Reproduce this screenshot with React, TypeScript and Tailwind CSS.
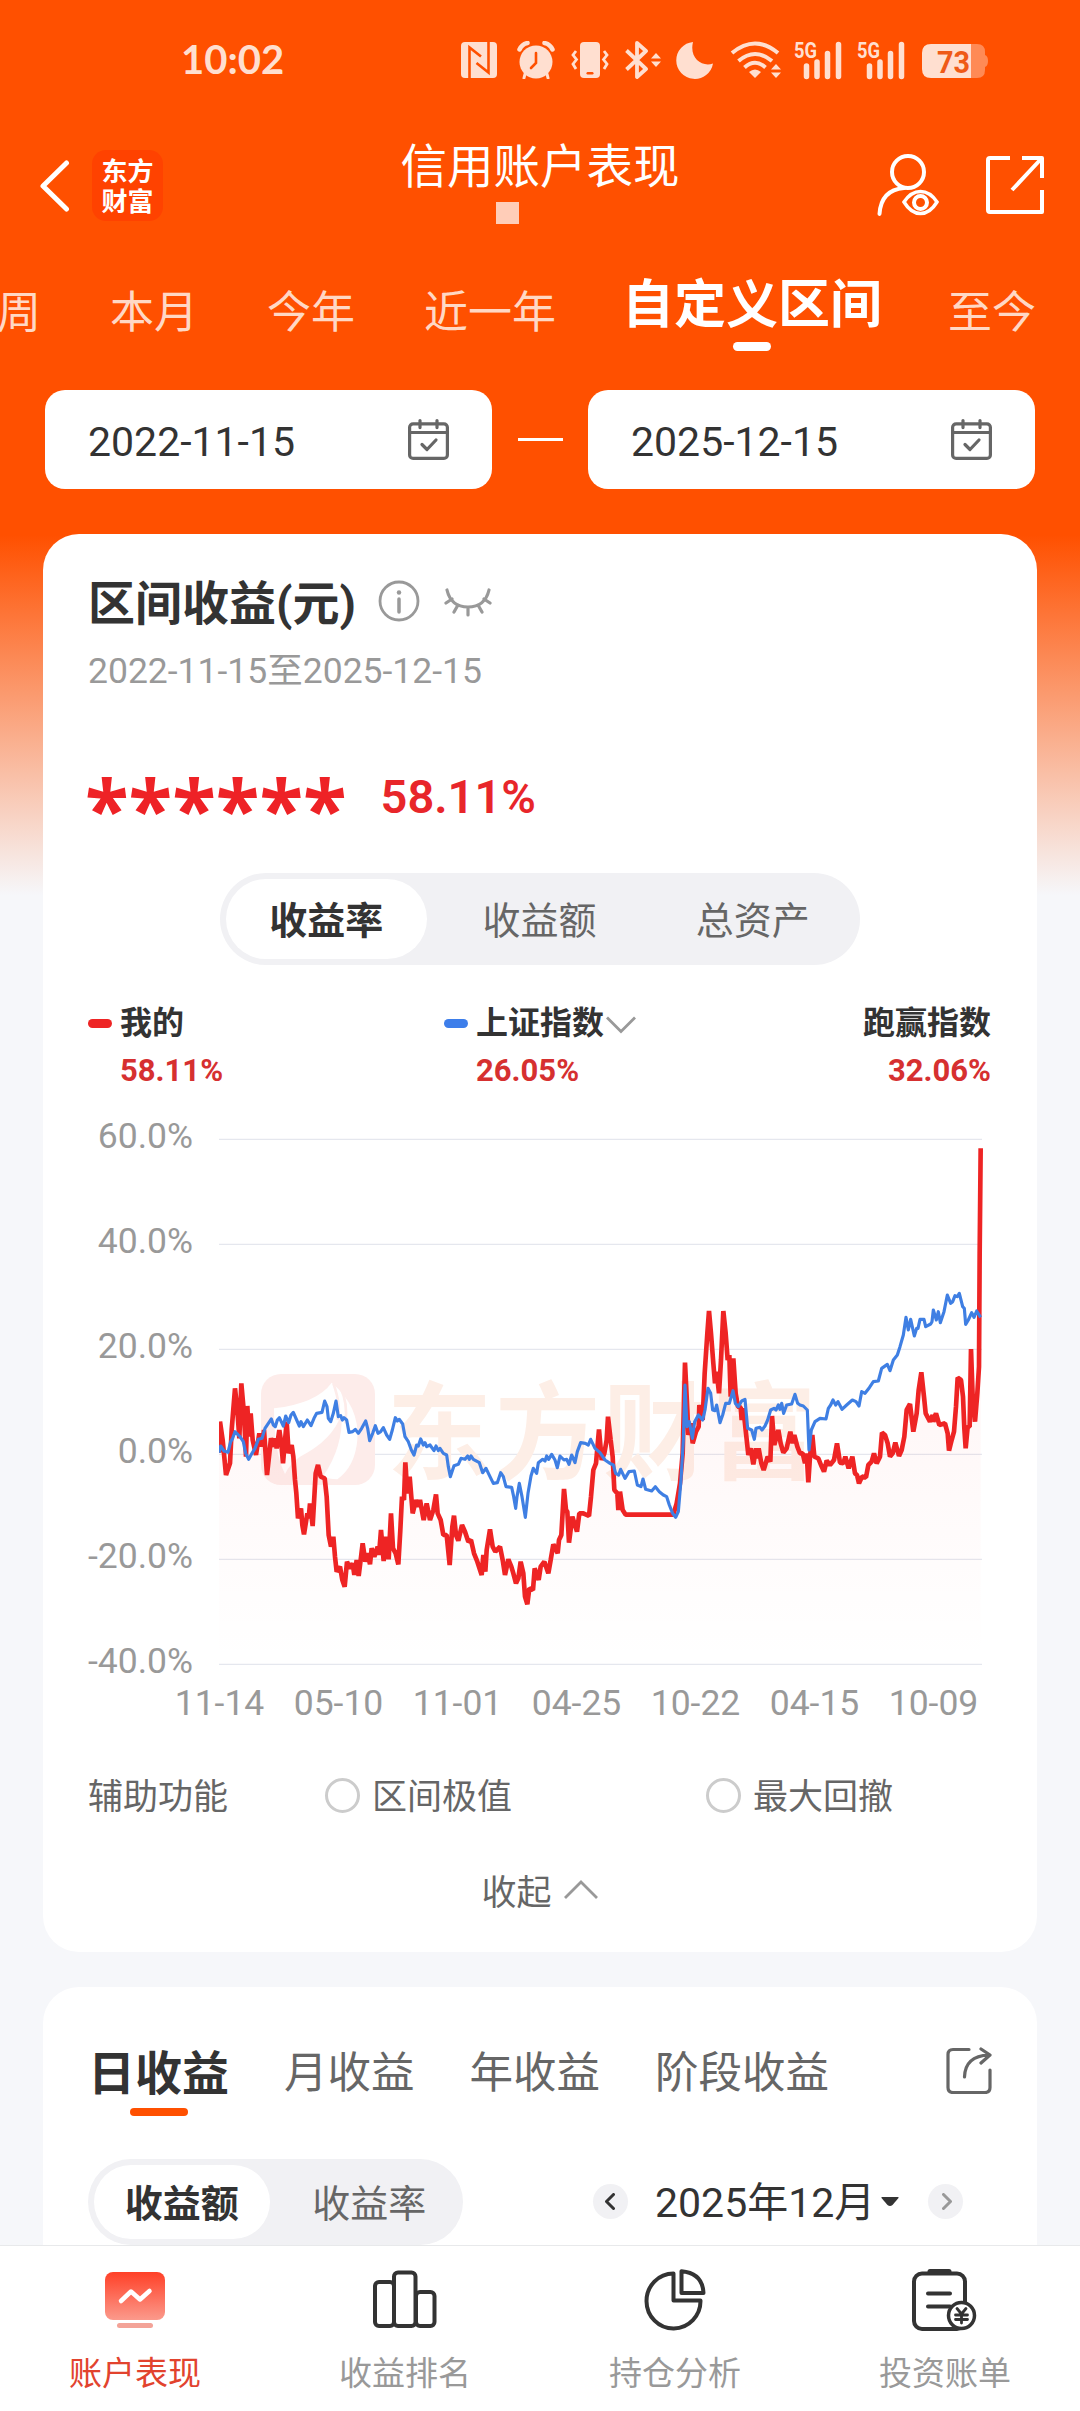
import React, { useState } from 'react';

const RANGES = ['周', '本月', '今年', '近一年', '自定义区间', '至今'];
const METRICS = ['收益率', '收益额', '总资产'];
const PERIODS = ['日收益', '月收益', '年收益', '阶段收益'];
const Y_TICKS = ['60.0%', '40.0%', '20.0%', '0.0%', '-20.0%', '-40.0%'];
const X_TICKS = ['11-14', '05-10', '11-01', '04-25', '10-22', '04-15', '10-09'];

// Chart space: three units per pixel, 0% sits at y = 1003 and 20% is 315 units
const MINE =
  '57,998 60,905 68,960 78,1065 90,1030 95,930 105,805 112,870 118,955 124,790 132,880 138,1010 142,858 147,950 152,880 158,960 168,1005 178,940 186,980 192,930 201,1065 213,955 222,980 226,955 230,985 238,930 244,970 249,1030 260,905 266,1000 275,975 280,1010 285,1080 289,1120 294,1195 303,1165 307,1215 312,1243 322,1180 326,1195 330,1150 338,1218 347,1060 354,1035 362,1070 374,1075 380,1130 386,1245 393,1280 400,1250 405,1310 410,1355 420,1340 427,1380 434,1400 441,1325 450,1345 458,1330 463,1365 470,1320 476,1368 482,1320 488,1270 496,1325 503,1300 510,1333 515,1285 523,1310 533,1280 537,1305 543,1230 551,1323 558,1250 566,1318 573,1180 579,1285 587,1300 595,1333 601,1230 606,1130 612,1140 616,1027 622,1120 629,1070 638,1180 648,1140 655,1160 660,1140 671,1200 680,1150 690,1200 700,1170 708,1123 713,1180 722,1200 730,1245 740,1245 749,1335 757,1220 762,1187 768,1245 775,1262 786,1215 795,1235 805,1265 813,1260 822,1300 832,1325 845,1365 850,1305 856,1355 860,1290 870,1228 878,1280 886,1295 900,1280 908,1320 915,1365 925,1318 934,1340 940,1360 948,1390 955,1375 962,1325 970,1360 975,1430 982,1453 988,1405 999,1410 1004,1345 1016,1380 1022,1340 1033,1325 1045,1360 1052,1320 1060,1273 1073,1300 1077,1260 1084,1245 1092,1107 1098,1170 1102,1175 1107,1268 1117,1190 1131,1235 1138,1180 1150,1180 1167,1188 1173,1130 1180,1050 1188,1030 1197,928 1205,1020 1213,1000 1220,960 1224,890 1232,960 1238,1010 1243,1110 1252,1120 1255,1170 1260,1115 1268,1170 1277,1184 1420,1184 1430,1150 1440,1090 1448,1000 1455,728 1462,870 1465,945 1472,910 1478,970 1488,935 1496,920 1498,855 1508,900 1514,760 1522,640 1527,573 1533,640 1540,730 1545,790 1550,755 1557,820 1563,720 1570,573 1577,640 1583,720 1588,705 1592,830 1600,715 1607,820 1614,860 1622,862 1625,900 1630,865 1638,940 1645,1005 1652,985 1660,1033 1668,985 1672,1015 1676,985 1684,1030 1691,1050 1703,1010 1711,1025 1716,888 1723,975 1735,930 1742,970 1750,998 1760,985 1771,935 1778,970 1783,945 1792,980 1800,1000 1808,1000 1815,1030 1820,1000 1825,1087 1830,1010 1837,945 1843,1010 1855,1015 1863,1035 1872,1055 1880,1022 1890,1035 1902,1020 1911,970 1920,1028 1930,1030 1936,1010 1946,1045 1957,1010 1965,1060 1971,1065 1977,1090 1986,1070 1998,1072 2005,1035 2015,1025 2022,1000 2030,1030 2040,1010 2046,938 2055,945 2063,970 2070,1010 2078,1000 2086,968 2097,1008 2105,990 2113,950 2120,870 2130,852 2140,935 2150,880 2156,810 2164,757 2172,830 2177,880 2190,905 2198,885 2200,905 2208,880 2218,915 2235,910 2243,940 2247,992 2255,960 2262,935 2268,860 2273,773 2283,780 2289,830 2293,925 2297,985 2303,920 2309,920 2313,687 2318,830 2325,905 2332,820 2337,740 2339,400 2342,85';

const INDEX =
  '57,998 62,978 72,993 84,997 92,965 98,955 105,935 120,950 130,965 137,1000 146,1018 156,1000 165,985 175,958 186,955 195,925 205,910 214,897 220,915 226,920 232,900 238,893 250,918 257,888 266,908 273,885 280,877 290,900 298,918 303,905 310,920 322,900 333,917 342,895 350,880 366,877 374,843 381,860 385,895 392,905 400,880 408,843 415,890 422,887 427,900 432,893 440,900 447,937 458,935 466,928 475,940 485,925 497,903 503,925 509,962 518,940 526,917 534,940 542,935 550,923 560,945 569,958 577,930 586,893 592,903 598,898 608,912 615,950 625,965 634,990 642,1005 650,975 655,978 662,957 670,975 675,968 680,980 690,975 702,992 708,978 715,992 720,985 730,1000 740,1005 745,1040 751,1070 762,1037 775,1033 783,1015 795,1018 803,1008 808,1018 813,1008 820,1018 838,1028 848,1058 858,1045 870,1070 880,1090 892,1088 902,1058 910,1070 918,1100 935,1102 941,1130 947,1165 951,1130 958,1090 966,1130 976,1192 984,1120 993,1068 1000,1045 1010,1060 1015,1028 1028,1018 1035,1023 1040,1008 1046,1018 1055,1003 1065,1020 1072,1043 1080,1008 1092,1020 1100,1018 1107,1033 1115,1005 1125,1028 1132,995 1142,968 1156,970 1165,975 1172,958 1185,985 1200,998 1215,1020 1230,1030 1240,1035 1247,1060 1256,1065 1262,1048 1275,1075 1287,1055 1303,1053 1312,1095 1323,1100 1329,1077 1337,1108 1355,1113 1366,1100 1378,1115 1390,1125 1400,1130 1408,1155 1418,1180 1427,1192 1435,1175 1443,1080 1450,960 1455,795 1461,920 1468,905 1477,955 1484,905 1495,885 1508,900 1515,870 1524,805 1532,820 1538,870 1545,872 1550,855 1560,908 1568,885 1577,850 1588,850 1599,812 1606,850 1615,860 1625,843 1635,838 1643,925 1655,930 1663,958 1668,925 1680,922 1686,930 1695,918 1703,900 1712,870 1722,865 1728,870 1735,855 1740,868 1745,850 1751,880 1760,855 1775,852 1785,823 1793,850 1800,855 1810,858 1822,870 1827,990 1834,930 1845,905 1860,895 1878,897 1885,865 1892,855 1899,840 1907,855 1914,845 1926,868 1940,855 1957,840 1968,845 1977,858 1985,815 1995,820 2008,803 2020,785 2035,783 2045,745 2062,733 2070,752 2080,720 2092,705 2100,680 2110,645 2118,592 2125,630 2132,598 2143,648 2150,625 2154,625 2160,598 2172,598 2177,620 2192,612 2196,605 2200,570 2209,600 2215,575 2221,608 2232,575 2242,525 2252,550 2258,545 2265,527 2272,530 2278,520 2288,560 2293,565 2297,613 2305,600 2315,578 2322,592 2330,573 2342,592';

const StatusIcons: React.FC = () => (
  <div className="flex items-start text-[#ffdfd0]">
    {/* NFC */}
    <svg viewBox="0 0 36 36" className="w-9 h-9 mt-0.5">
      <rect width="36" height="36" rx="4" fill="currentColor" />
      <path d="M8.500 36V5.500L20 14.500M27.500 0V30.500L15.500 21" fill="none" stroke="#ff5000" strokeWidth="2.600" />
    </svg>
    {/* Alarm */}
    <svg viewBox="0 0 38 38" className="w-[38px] h-[38px] ml-5 mt-px">
      <circle cx="19" cy="21" r="16.500" fill="currentColor" />
      <path d="M2.500 8.500Q5 3 10.500 2M35.500 8.500Q33 3 27.500 2" stroke="currentColor" strokeWidth="4.500" strokeLinecap="round" fill="none" />
      <path d="M8 33l-1 4M30 33l1 4" stroke="currentColor" strokeWidth="3" strokeLinecap="round" />
      <path d="M19 12v10l-5 5" stroke="#ff5000" strokeWidth="2.600" fill="none" strokeLinecap="round" />
    </svg>
    {/* Vibrate */}
    <svg viewBox="0 0 38 36" className="w-[38px] h-9 ml-4 mt-0.5">
      <rect x="9" width="20" height="36" rx="4" fill="currentColor" />
      <rect x="15.500" y="30" width="7" height="2.500" rx="1.200" fill="#ff5000" />
      <path d="M5 9l-3 4 3.500 4.500L2 22l3 5M33 9l3 4-3.500 4.500L36 22l-3 5" fill="none" stroke="currentColor" strokeWidth="2.800" />
    </svg>
    {/* Bluetooth */}
    <svg viewBox="0 0 37 38" className="w-[37px] h-[38px] ml-4 mt-px">
      <path d="M1.500 9.500L21 28l-9 8V2l9 8L1.500 28.500" fill="none" stroke="currentColor" strokeWidth="3.800" strokeLinejoin="round" />
      <path d="M31 12l5 5.500H26zM31 26l5-5.500H26z" fill="currentColor" />
    </svg>
    {/* Do not disturb */}
    <svg viewBox="0 0 38 38" className="w-[38px] h-[38px] ml-3.5 mt-px">
      <path d="M17 1A18.500 18.500 0 1 0 37 22.500C26 26.500 13 17 17 1z" fill="currentColor" />
    </svg>
    {/* Wi-Fi */}
    <svg viewBox="0 0 51 38" className="w-[51px] h-[38px] ml-4 mt-px">
      <path d="M2 12Q25 -7 48 12M8.500 20Q25 6 42 20M14.500 26.500Q25 17 35.500 26.500" fill="none" stroke="currentColor" strokeWidth="4" />
      <path d="M25 37l-6-6q6-5 12 0z" fill="currentColor" />
      <path d="M46 23l5 5.500H41zM46 37l5-5.500H41z" fill="currentColor" />
    </svg>
    {[0, 1].map((sim) => (
      <svg key={sim} viewBox="0 0 50 38" className="w-[50px] h-[38px] ml-[13px] mt-px overflow-visible">
        <text x="0" y="16.500" fontSize="22" fontWeight="700" fontFamily="Roboto, sans-serif" textLength="23" lengthAdjust="spacingAndGlyphs" fill="currentColor">5G</text>
        <path d="M12.500 25v10.500M23 21v14.500M33.500 12.500v23M44.500 3.500v32" stroke="currentColor" strokeWidth="5.500" strokeLinecap="round" />
      </svg>
    ))}
    {/* Battery */}
    <svg viewBox="0 0 67 34" className="w-[67px] h-[34px] ml-[15px] mt-1 overflow-visible">
      <path d="M49 0h6q8 0 8 8v3q3 1 3 6t-3 6v3q0 8-8 8h-6z" fill="#ff8a55" />
      <path d="M49 0H9Q0 0 0 9v16q0 9 9 9h40z" fill="currentColor" />
      <text x="15" y="28.500" fontSize="32" fontWeight="700" fontFamily="Roboto, sans-serif" textLength="33" lengthAdjust="spacingAndGlyphs" fill="#ef5a17">73</text>
    </svg>
  </div>
);

const CalendarIcon: React.FC = () => (
  <svg viewBox="0 0 41 41" className="w-[41px] h-[41px] shrink-0" fill="none" stroke="#666" strokeWidth="3.200" strokeLinecap="round" strokeLinejoin="round">
    <rect x="1.600" y="4.800" width="37.800" height="34.600" rx="3.500" />
    <path d="M2 13.500h37M12 1.600v7M29 1.600v7M14 25.500l5 5 9-9.500" />
  </svg>
);

const DateField: React.FC<{ value: string }> = ({ value }) => (
  <button className="w-[447px] h-[99px] bg-white rounded-[20px] flex items-center justify-between pl-[43px] pr-[43px] text-[41px] leading-none text-[#333]">
    <span className="pt-1.5">{value}</span>
    <CalendarIcon />
  </button>
);

const ProfitChart: React.FC = () => (
  <svg viewBox="57 51 2298 1587" className="w-[766px] h-[529px] mt-[19px] ml-[26px] shrink-0">
    <defs>
      <linearGradient id="mineFill" x1="0" y1="0" x2="0" y2="1">
        <stop offset="0" stopColor="#f22" stopOpacity="0.07" />
        <stop offset="1" stopColor="#f22" stopOpacity="0" />
      </linearGradient>
    </defs>
    {[58, 373, 688, 1003, 1318, 1633].map((y) => (
      <line key={y} x1="57" x2="2346" y1={y} y2={y} stroke="#e5e7ee" strokeWidth="4" />
    ))}
    {/* Watermark */}
    <rect x="183" y="762" width="342" height="333" rx="60" fill="#fdecea" />
    <path d="M222 865Q350 850 395 788Q480 860 472 960Q465 1040 412 1078Q385 1078 370 1068Q430 980 425 880Q400 960 300 1010Q270 1030 255 1062Q222 1000 222 865z" fill="#fff" />
    <path d="M400 790Q425 860 412 900M420 800Q445 850 436 910" fill="none" stroke="#fdecea" strokeWidth="8" />
    <text x="560" y="1052" fontSize="316" fontWeight="700" fontFamily="'Noto Sans CJK SC', sans-serif" textLength="1290" fill="#fdeee6">东方财富</text>
    <polygon points={`57,1633 ${MINE} 2342,1633`} fill="url(#mineFill)" />
    <polyline points={MINE} fill="none" stroke="#ee2424" strokeWidth="14" strokeLinejoin="bevel" />
    <polyline points={INDEX} fill="none" stroke="#3f7fe3" strokeWidth="9.500" strokeLinejoin="round" />
  </svg>
);

const NAV_ITEMS = [
  {
    label: '账户表现',
    icon: (
      <svg viewBox="0 0 66 66" className="w-[66px] h-[66px]">
        <defs>
          <linearGradient id="navActive" x1="0" y1="0" x2="0" y2="1">
            <stop offset="0" stopColor="#ff4027" />
            <stop offset="1" stopColor="#fb9a8c" />
          </linearGradient>
        </defs>
        <rect x="3" y="5" width="60" height="48" rx="8" fill="url(#navActive)" />
        <path d="M19 34l10-9.500 9 8L47.500 24" fill="none" stroke="#fff" strokeWidth="4.500" strokeLinecap="round" strokeLinejoin="round" />
        <rect x="15" y="56" width="36" height="5" rx="2.500" fill="#f3a398" />
      </svg>
    ),
  },
  {
    label: '收益排名',
    icon: (
      <svg viewBox="0 0 66 66" className="w-[66px] h-[66px]" fill="none" stroke="#333" strokeWidth="4">
        <rect x="3" y="15" width="19" height="44" rx="4" />
        <rect x="22" y="5.500" width="21.500" height="53.500" rx="4" />
        <rect x="44" y="25" width="18.500" height="34" rx="4" />
      </svg>
    ),
  },
  {
    label: '持仓分析',
    icon: (
      <svg viewBox="0 0 66 66" className="w-[66px] h-[66px]" fill="none" stroke="#333" strokeWidth="4" strokeLinejoin="round">
        <path d="M31.500 6.500A27 27.500 0 1 0 58.500 33.500H31.500z" />
        <path d="M39.500 4.200V26H61.500Q60.500 6 39.500 4.200z" />
      </svg>
    ),
  },
  {
    label: '投资账单',
    icon: (
      <svg viewBox="0 0 66 66" className="w-[66px] h-[66px]" fill="none" stroke="#333" strokeWidth="4" strokeLinecap="round">
        <rect x="2" y="6.500" width="51" height="55.500" rx="8" />
        <path d="M18 4.500h19" strokeWidth="5" />
        <path d="M16 26.500h22M16 39.500h22" />
        <circle cx="49.500" cy="48.500" r="13" fill="#fff" strokeWidth="3.500" />
        <path d="M45 41.500l4.500 5.500 4.500-5.500M49.500 47v9M43.500 48h12M43.500 52.500h12" strokeWidth="2.800" />
      </svg>
    ),
  },
];

const App: React.FC = () => {
  const [range, setRange] = useState('自定义区间');
  const [metric, setMetric] = useState('收益率');
  const [period, setPeriod] = useState('日收益');
  const [dailyMetric, setDailyMetric] = useState('收益额');

  return (
    <div className="w-[1080px] h-[2411px] overflow-hidden flex flex-col bg-[#f6f7fa] bg-[linear-gradient(180deg,#ff5000_0px,#ff5000_535px,#f6f7fa_895px)] font-[Roboto,'Noto_Sans_CJK_SC',sans-serif] text-[#333]">
      {/* Status bar */}
      <div className="h-[120px] shrink-0 flex items-start justify-between pt-10 pl-[181px] pr-[91px]">
        <span className="font-[Lato] font-bold text-[40px] leading-[38px] text-[#ffdfd0]">10:02</span>
        <StatusIcons />
      </div>

      {/* Title bar */}
      <div className="h-[130px] shrink-0 grid grid-cols-[1fr_auto_1fr] text-white">
        <div className="flex items-center pl-10">
          <svg viewBox="0 0 30 52" className="w-[30px] h-[52px] mt-0.5" fill="none" stroke="currentColor" strokeWidth="5" strokeLinecap="round" strokeLinejoin="round">
            <path d="M26.500 3L3 26l23.500 23" />
          </svg>
          <div className="w-[71px] h-[71px] ml-[22px] rounded-[14px] bg-[#ff4200] flex flex-col items-center justify-center font-['Noto_Sans_CJK_SC'] font-bold text-[26px] leading-[30px]">
            <span>东方</span>
            <span>财富</span>
          </div>
        </div>
        <div className="pt-[23px]">
          <h1 className="text-[46.500px] leading-[48px]">信用账户表现</h1>
          <div className="w-[23px] h-[22px] ml-[95px] mt-[11px] bg-[#ffcdb8]" />
        </div>
        <div className="flex items-center justify-end pr-9 gap-[47px]">
          <svg viewBox="0 0 62 62" className="w-[62px] h-[62px]" fill="none" stroke="currentColor" strokeWidth="4" strokeLinecap="round">
            <circle cx="31" cy="18" r="16" />
            <path d="M2.500 60Q4 36 27 34" />
            <path d="M27 48Q34 37.500 43.500 37.500T60 48Q53 59.500 43.500 59.500T27 48z" strokeWidth="3.500" />
            <circle cx="43.500" cy="48.500" r="6.500" />
          </svg>
          <svg viewBox="0 0 58 58" className="w-[58px] h-[58px]" fill="none" stroke="currentColor" strokeWidth="4" strokeLinejoin="round">
            <path d="M24 2H4Q2 2 2 4v50q0 2 2 2h52V34" />
            <path d="M36 2h20v20M55 3L26 34" />
          </svg>
        </div>
      </div>

      {/* Range tabs */}
      <div className="h-[120px] shrink-0 flex items-center gap-[69px] -ml-[3px] pt-1.5 text-[44px] leading-[60px] text-[#ffd8c5] whitespace-nowrap">
        {RANGES.map((item) => (
          <button
            key={item}
            onClick={() => setRange(item)}
            className={range === item ? 'relative -mt-3.5 -mx-[3px] text-[52px] font-bold text-white' : ''}
          >
            {item}
            {range === item && <span className="absolute left-1/2 -translate-x-1/2 -bottom-[15px] w-[38px] h-[9px] rounded-full bg-white" />}
          </button>
        ))}
      </div>

      <div className="shrink-0 flex items-center justify-between mt-5 px-[45px]">
        <DateField value="2022-11-15" />
        <span className="w-[45px] h-[3px] bg-white" />
        <DateField value="2025-12-15" />
      </div>

      {/* Interval profit */}
      <section className="h-[1418px] shrink-0 mt-[45px] mx-[43px] pt-10 pl-[45px] pr-[46px] bg-white rounded-[36px]">
        <div className="h-[60px] flex items-center">
          <h2 className="text-[47px] leading-[60px] font-bold">区间收益(元)</h2>
          <svg viewBox="0 0 42 42" className="w-[42px] h-[42px] ml-[22px] -mt-1.5" fill="none" stroke="#999" strokeWidth="2.800" strokeLinecap="round">
            <circle cx="21" cy="21" r="19" />
            <path d="M21 19v13" strokeWidth="3.500" />
            <path d="M21 12.500v.1" strokeWidth="4.500" />
          </svg>
          <svg viewBox="0 0 48 30" className="w-12 h-[30px] ml-6 -mt-1" fill="none" stroke="#999" strokeWidth="3.200" strokeLinecap="round">
            <path d="M3 3Q7 20 24 20T45 3M8 12l-6 4M40 12l6 4M14 18l-4 7M34 18l4 7M24 21v7" />
          </svg>
        </div>
        <p className="mt-[17px] text-[35.500px] leading-10 text-[#999]">2022-11-15至2025-12-15</p>
        <div className="h-[60px] mt-[76px] flex items-center text-[#e8262a]">
          <span className="-ml-[3px] font-['Open_Sans'] font-bold text-[80px] leading-[60px] h-[60px] pt-2.5 text-[#ee2226]">******</span>
          <span className="ml-[34px] text-[47px] leading-[60px] font-semibold">58.11%</span>
        </div>

        <div className="w-[640px] h-[92px] mx-auto mt-[46px] flex rounded-full bg-[#f1f1f4] text-[38px] leading-none">
          {METRICS.map((item) => (
            <button
              key={item}
              onClick={() => setMetric(item)}
              className={`flex-1 m-1.5 pt-1 rounded-full ${metric === item ? 'bg-white font-bold' : 'text-[#666]'}`}
            >
              {item}
            </button>
          ))}
        </div>

        {/* Legend */}
        <div className="mt-[38px] flex justify-between text-[32px] leading-10 font-bold">
          <div className="w-[356px]">
            <div className="flex items-center">
              <span className="w-6 h-[9px] mr-2 rounded-full bg-[#ee2424]" />
              我的
            </div>
            <p className="mt-2 ml-8 text-[31px] text-[#d63030]">58.11%</p>
          </div>
          <div className="flex-1">
            <div className="flex items-center">
              <span className="w-6 h-[9px] mr-2 rounded-full bg-[#3d7eea]" />
              上证指数
              <svg viewBox="0 0 30 18" className="w-[30px] h-[18px] ml-0.5 mt-1" fill="none" stroke="#999" strokeWidth="2.800">
                <path d="M1 1.500l14 14 14-14" />
              </svg>
            </div>
            <p className="mt-2 ml-8 text-[31px] text-[#d63030]">26.05%</p>
          </div>
          <div className="text-right">
            <p>跑赢指数</p>
            <p className="mt-2 text-[31px] text-[#d63030]">32.06%</p>
          </div>
        </div>

        <div className="mt-[27px] flex items-start">
          <div className="w-[105px] h-[561px] shrink-0 flex flex-col justify-between items-end text-[35.500px] leading-9 text-[#999] whitespace-nowrap">
            {Y_TICKS.map((tick) => (
              <span key={tick}>{tick}</span>
            ))}
          </div>
          <ProfitChart />
        </div>
        <div className="mt-1.5 ml-[72px] flex text-[35.500px] leading-9 text-[#999]">
          {X_TICKS.map((tick) => (
            <span key={tick} className="w-[119px] shrink-0 text-center">{tick}</span>
          ))}
        </div>

        <div className="h-10 mt-[57px] flex items-center text-[35px] leading-10 text-[#666]">
          <span>辅助功能</span>
          <label className="flex items-center ml-[97px]">
            <span className="w-[35px] h-[35px] mr-3 mb-1.5 rounded-full border-3 border-[#ccc]" />
            区间极值
          </label>
          <label className="flex items-center ml-[194px]">
            <span className="w-[35px] h-[35px] mr-3 mb-1.5 rounded-full border-3 border-[#ccc]" />
            最大回撤
          </label>
        </div>

        <button className="h-10 mt-14 mx-auto flex items-center text-[35px] leading-10 text-[#666]">
          收起
          <svg viewBox="0 0 34 19" className="w-[34px] h-[19px] ml-3 -mt-2.5" fill="none" stroke="#999" strokeWidth="2.800">
            <path d="M1 18L17 2l16 16" />
          </svg>
        </button>
      </section>

      {/* Profit calendar */}
      <section className="h-[258px] shrink-0 mt-[35px] mx-[43px] pt-[57px] pl-[45px] pr-[45px] bg-white rounded-t-[36px]">
        <div className="h-[60px] flex items-center gap-[55px] text-[43.500px] leading-[60px] text-[#666] whitespace-nowrap">
          {PERIODS.map((item) => (
            <button
              key={item}
              onClick={() => setPeriod(item)}
              className={period === item ? 'relative text-[47px] font-bold text-[#333]' : ''}
            >
              {item}
              {period === item && <span className="absolute left-1/2 -translate-x-1/2 -bottom-3 w-[58px] h-2 rounded-full bg-[#ff5000]" />}
            </button>
          ))}
          <svg viewBox="0 0 46 47" className="w-[46px] h-[47px] ml-auto -mt-2" fill="none" stroke="#666" strokeWidth="3.200" strokeLinecap="round" strokeLinejoin="round">
            <path d="M23 2.500H7q-5 0-5 5v33q0 5 5 5h32q5 0 5-5V23" />
            <path d="M18.500 30Q19 9 43 8M35 2l9 6-9 8" />
          </svg>
        </div>

        <div className="mt-[55px] flex items-center">
          <div className="w-[375px] h-[86px] flex rounded-full bg-[#f1f1f4] text-[38px] leading-none">
            {['收益额', '收益率'].map((item) => (
              <button
                key={item}
                onClick={() => setDailyMetric(item)}
                className={`flex-1 m-1.5 pt-1 rounded-full ${dailyMetric === item ? 'bg-white font-bold' : 'text-[#666]'}`}
              >
                {item}
              </button>
            ))}
          </div>
          <button className="w-[35px] h-[35px] ml-[130px] -mt-0.5 rounded-full bg-[#f1f1f4] flex items-center justify-center">
            <svg viewBox="0 0 10 17" className="w-2.5 h-[17px] -ml-0.5" fill="none" stroke="#333" strokeWidth="3" strokeLinecap="round" strokeLinejoin="round">
              <path d="M8.500 1.500l-7 7 7 7" />
            </svg>
          </button>
          <span className="ml-[27px] mt-0.5 text-[41px] leading-[60px] whitespace-nowrap">2025年12月</span>
          <svg viewBox="0 0 18 9" className="w-[18px] h-[9px] ml-1.5 -mt-0.5">
            <path d="M1 0h16q1 0 .5 1l-6 7q-2.500 2-5 0L.5 1Q0 0 1 0z" fill="#333" />
          </svg>
          <button className="w-[35px] h-[35px] ml-auto mr-[29px] -mt-0.5 rounded-full bg-[#f1f1f4] flex items-center justify-center">
            <svg viewBox="0 0 10 17" className="w-2.5 h-[17px] ml-0.5" fill="none" stroke="#999" strokeWidth="3" strokeLinecap="round" strokeLinejoin="round">
              <path d="M1.500 1.500l7 7-7 7" />
            </svg>
          </button>
        </div>
      </section>

      {/* Bottom navigation */}
      <nav className="h-[166px] shrink-0 grid grid-cols-4 bg-white border-t border-[#e8e9eb] text-[33px] leading-10 text-[#999]">
        {NAV_ITEMS.map((item, i) => (
          <button key={item.label} className={`flex flex-col items-center pt-[21px] gap-[21px] ${i === 0 ? 'text-[#e2432e]' : ''}`}>
            {item.icon}
            <span>{item.label}</span>
          </button>
        ))}
      </nav>
    </div>
  );
};

export default App;
